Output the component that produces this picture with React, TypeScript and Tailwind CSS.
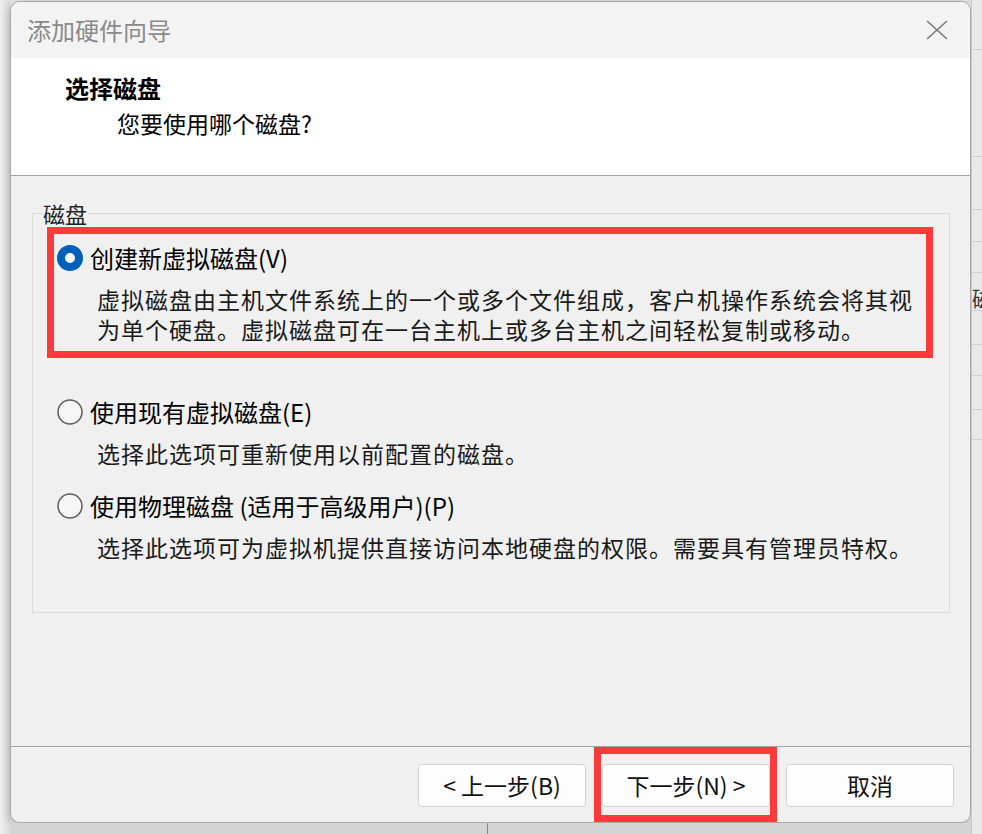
import React from "react";

const FONT = { fontFamily: '"Noto Sans CJK SC", "Noto Sans", sans-serif' };

function Radio({ checked }: { checked?: boolean }) {
  return (
    <svg width="26" height="26" viewBox="0 0 26 26" className="shrink-0">
      {checked ? (
        <>
          <circle cx="13" cy="13" r="13" fill="#005fb8" />
          <circle cx="13" cy="13" r="5" fill="#ffffff" />
        </>
      ) : (
        <circle cx="13" cy="13" r="12" fill="#f6f6f6" stroke="#5c5c5c" strokeWidth="1.5" />
      )}
    </svg>
  );
}

function Option({
  label,
  lines,
  checked,
  className,
}: {
  label: string;
  lines: string[];
  checked?: boolean;
  className?: string;
}) {
  return (
    <div className={className}>
      <div className="flex items-center gap-[7px] ml-[24px] h-[30px]">
        <Radio checked={checked} />
        <span className="text-[24px] leading-[30px] text-black">{label}</span>
      </div>
      <div className="ml-[64px] mt-[11px] text-[23px] leading-[30px] tracking-[1px] text-[#1a1a1a]">
        {lines.map((l) => (
          <div key={l} className="h-[30px] whitespace-nowrap">
            {l}
          </div>
        ))}
      </div>
    </div>
  );
}

function Button({ children }: { children: React.ReactNode }) {
  return (
    <button className="w-[168px] h-[43px] bg-[#fdfdfd] border border-[#d3d3d3] rounded-[4px] text-[23px] text-[#111] flex items-center justify-center">
      {children}
    </button>
  );
}

const rightLines = [50, 157, 210, 242, 273, 311, 345, 376, 410, 440];

export default function App() {
  return (
    <div className="relative w-[982px] h-[834px] bg-[#e6e6e6] overflow-hidden flex" style={FONT}>
      {/* left strip */}
      <div className="w-[10px] bg-gradient-to-r from-[#efefef] to-[#dadada]" />

      {/* dialog column */}
      <div className="w-[961px] flex flex-col">
        <div className="h-[1px] bg-[#e6e6e6]" />
        <div className="h-[822px] border border-[#a9a9a9] rounded-[10px] bg-[#f0f0f0] flex flex-col overflow-hidden shadow-[0_2px_8px_rgba(0,0,0,0.25)]">
          {/* title bar */}
          <div className="h-[56px] bg-[#f3f3f3] flex items-center justify-between pl-[16px] pr-[22px]">
            <span className="text-[24px] text-[#8a8a8a]">添加硬件向导</span>
            <svg width="22" height="20" viewBox="0 0 22 20">
              <path d="M1 1 L21 19 M21 1 L1 19" stroke="#7a7a7a" strokeWidth="1.6" fill="none" />
            </svg>
          </div>

          {/* header */}
          <div className="h-[118px] bg-white border-b border-[#a3a3a3] pt-[15px] pl-[54px]">
            <div className="text-[24px] leading-[30px] font-bold text-black">选择磁盘</div>
            <div className="mt-[5px] ml-[52px] text-[23px] leading-[30px] text-black">您要使用哪个磁盘?</div>
          </div>

          {/* body */}
          <div className="h-[570px] pt-[25px] pr-[20px] pl-[21px]">
            <fieldset className="border border-[#d9d9d9] m-0 p-0 pb-[50px] min-w-0">
              <legend className="ml-[9px] px-[1px] text-[22px] leading-[24px] text-[#222]">磁盘</legend>
              <Option
                className="mt-[18px]"
                checked
                label="创建新虚拟磁盘(V)"
                lines={[
                  "虚拟磁盘由主机文件系统上的一个或多个文件组成，客户机操作系统会将其视",
                  "为单个硬盘。虚拟磁盘可在一台主机上或多台主机之间轻松复制或移动。",
                ]}
              />
              <Option className="mt-[53px]" label="使用现有虚拟磁盘(E)" lines={["选择此选项可重新使用以前配置的磁盘。"]} />
              <Option
                className="mt-[23px]"
                label="使用物理磁盘 (适用于高级用户)(P)"
                lines={["选择此选项可为虚拟机提供直接访问本地硬盘的权限。需要具有管理员特权。"]}
              />
            </fieldset>
          </div>

          {/* footer */}
          <div className="flex-1 border-t border-[#a3a3a3] flex justify-end items-start gap-[16px] pt-[17px] pr-[16px]">
            <Button>&lt; 上一步(B)</Button>
            <Button>下一步(N) &gt;</Button>
            <Button>取消</Button>
          </div>
        </div>
        <div className="flex-1 bg-[#d4d4d4] flex">
          <div className="ml-[477px] w-px bg-[#8a8a8a]" />
        </div>
      </div>

      {/* right strip: window behind */}
      <div className="flex-1 bg-[#e9e9e9] border-l border-[#c8c8c8] flex flex-col overflow-hidden">
        {rightLines.map((y, i) => (
          <div
            key={y}
            className="border-b border-[#cfcfcf] shrink-0"
            style={{ height: i === 0 ? y : y - rightLines[i - 1] }}
          />
        ))}
      </div>
      <span className="absolute left-[972px] top-[284px] text-[22px] leading-[26px] text-[#333] w-[10px] overflow-hidden">
        磁
      </span>

      {/* red annotation boxes */}
      <div className="absolute left-[47px] top-[227px] w-[886px] h-[131px] border-[7px] border-[#fd3a3a]" />
      <div className="absolute left-[594px] top-[747px] w-[183px] h-[75px] border-[7px] border-[#fd3a3a]" />
    </div>
  );
}
